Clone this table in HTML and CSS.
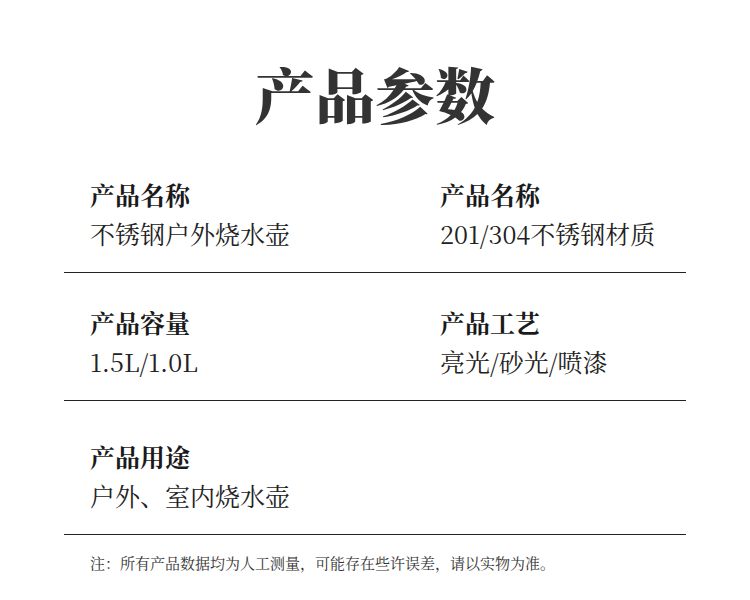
FILE: index.html
```html
<!DOCTYPE html>
<html lang="zh-CN">
<head>
<meta charset="utf-8">
<link rel="stylesheet" href="styles.css">
</head>
<body>
<div class="page">
  <h1 class="title">产品参数</h1>
  <div class="row row-1">
    <div class="cell">
      <div class="label">产品名称</div>
      <div class="value">不锈钢户外烧水壶</div>
    </div>
    <div class="cell">
      <div class="label">产品名称</div>
      <div class="value">201/304不锈钢材质</div>
    </div>
  </div>
  <div class="row row-2">
    <div class="cell">
      <div class="label">产品容量</div>
      <div class="value">1.5L/1.0L</div>
    </div>
    <div class="cell">
      <div class="label">产品工艺</div>
      <div class="value">亮光/砂光/喷漆</div>
    </div>
  </div>
  <div class="row row-3">
    <div class="cell">
      <div class="label">产品用途</div>
      <div class="value">户外、室内烧水壶</div>
    </div>
  </div>
  <p class="note">注：所有产品数据均为人工测量，可能存在些许误差，请以实物为准。</p>
</div>
</body>
</html>
```
FILE: styles.css
```css
html, body {
  margin: 0;
  padding: 0;
  background: #ffffff;
}
body {
  font-family: "Noto Serif CJK SC", "Source Han Serif SC", "Liberation Serif", "Noto Sans CJK SC", serif;
  color: #222222;
}
.page {
  width: 750px;
  height: 600px;
  box-sizing: border-box;
  padding: 0 64px;
}
.title {
  margin: 0;
  padding-top: 53px;
  height: 118px;
  box-sizing: border-box;
  text-align: center;
  font-size: 60px;
  font-weight: 900;
  line-height: 80px;
  color: #333333;
}
.row {
  display: grid;
  grid-template-columns: 350px 1fr;
  border-bottom: 1px solid #222222;
  padding-left: 26px;
  padding-bottom: 24px;
}
.row-1 {
  padding-top: 61px;
}
.row-2 {
  padding-top: 34px;
}
.row-3 {
  padding-top: 40px;
}
.label {
  font-size: 25px;
  font-weight: 700;
  line-height: 30px;
  color: #1a1a1a;
}
.value {
  font-size: 25px;
  font-weight: 400;
  line-height: 30px;
  margin-top: 9px;
  color: #222222;
}
.note {
  margin: 18px 0 0 26px;
  font-size: 15px;
  line-height: 20px;
  color: #333333;
}
```
